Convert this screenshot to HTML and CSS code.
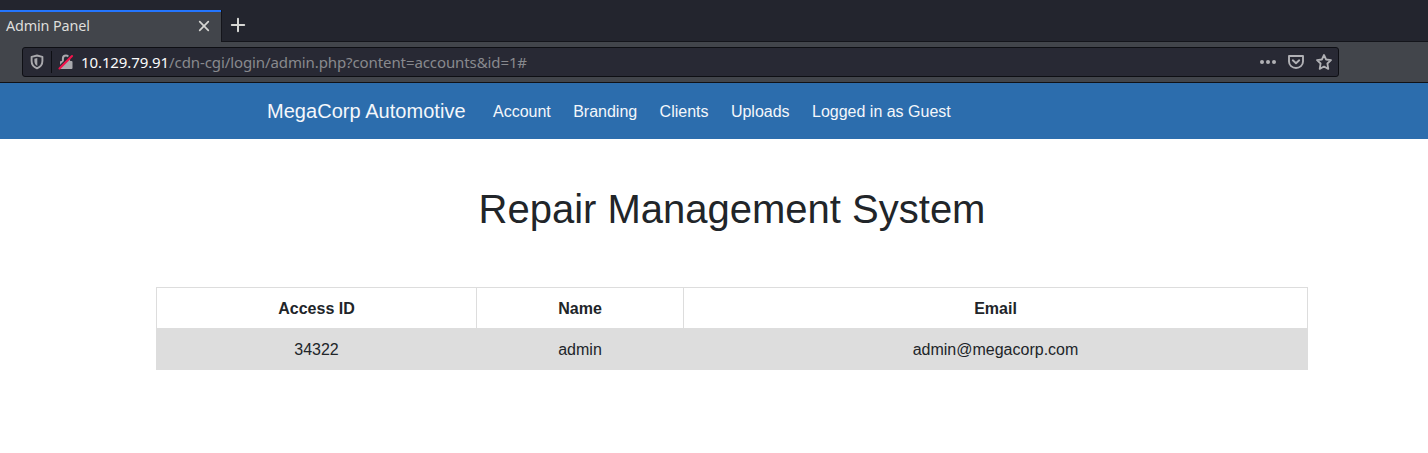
FILE: index.html
```html
<!DOCTYPE html>
<html lang="en">
<head>
<meta charset="utf-8">
<title>Admin Panel</title>
<link rel="stylesheet" href="styles.css">
</head>
<body>
<header class="browser">
  <div class="tabstrip">
    <div class="tab"><span class="tab-title">Admin Panel</span>
      <svg class="tab-close" width="12" height="12" viewBox="0 0 12 12"><path d="M1.7 1.7l8.6 8.6M10.3 1.7l-8.6 8.6" stroke="#d6d6d3" stroke-width="1.7" stroke-linecap="round"/></svg>
    </div>
    <div class="tab-rest">
      <svg width="16" height="16" viewBox="0 0 16 16"><path d="M8 1.8v12.4M1.8 8h12.4" stroke="#d6d6d3" stroke-width="2" stroke-linecap="round"/></svg>
    </div>
  </div>
  <div class="toolbar">
    <div class="urlbar">
      <svg class="shield" width="14" height="16" viewBox="0 0 14 16"><path d="M7 1.5L12.400 2.800V7c0 3.600-2 6-5.400 7.300C3.600 13 1.600 10.600 1.600 7V2.800z" fill="none" stroke="#a9a9ad" stroke-width="1.900" stroke-linejoin="round"/><path d="M7.300 4v8C5.200 10.900 4.400 9.200 4.400 7V4.700z" fill="#a9a9ad"/></svg>
      <span class="divider"></span>
      <svg class="lock" width="16" height="16" viewBox="0 0 16 16"><path d="M4.900 7.500V4.700a3.100 3.100 0 0 1 6.200 0V7.500" fill="none" stroke="#a9a9ad" stroke-width="2"/><rect x="2" y="7" width="12.500" height="8" rx="1" fill="#a9a9ad"/><path d="M.8 13.300L12.700 1.400" stroke="#282934" stroke-width="1.800"/><path d="M1.500 14.500L14 2" stroke="#f2134b" stroke-width="2.100" stroke-linecap="round"/></svg>
      <span class="url"><span class="host">10.129.79.91</span>/cdn-cgi/login/admin.php?content=accounts&amp;id=1#</span>
      <span class="actions">
        <svg width="16" height="16" viewBox="0 0 16 16" fill="#b1b1b5"><circle cx="2" cy="8" r="2"/><circle cx="8" cy="8" r="2"/><circle cx="14" cy="8" r="2"/></svg>
        <svg width="16" height="16" viewBox="0 0 16 16" fill="none" stroke="#b1b1b5" stroke-width="1.900" stroke-linecap="round" stroke-linejoin="round"><path d="M1 2h14v5.500a7 6.500 0 0 1-14 0z"/><path d="M4.800 6.300L8 9.300l3.200-3"/></svg>
        <svg width="16" height="16" viewBox="0 0 16 16" fill="none" stroke="#b1b1b5" stroke-width="1.800" stroke-linejoin="round"><path d="M8 1l2.100 4.500 4.900.6-3.600 3.400.9 5.400L8 12.500l-4.300 2.400.9-5.400L1 6.100l4.900-.6z"/></svg>
      </span>
    </div>
  </div>
</header>
<nav class="nav">
  <a class="brand">MegaCorp Automotive</a>
  <ul class="links"><li>Account</li><li>Branding</li><li>Clients</li><li>Uploads</li><li>Logged in as Guest</li></ul>
</nav>
<main>
  <h1 class="title">Repair Management System</h1>
  <table class="accounts">
    <colgroup><col class="col-id"><col class="col-name"><col></colgroup>
    <tr><th>Access ID</th><th>Name</th><th>Email</th></tr>
    <tr class="shaded"><td>34322</td><td>admin</td><td>admin@megacorp.com</td></tr>
  </table>
</main>
</body>
</html>
```
FILE: styles.css
```css
* { box-sizing: border-box; }
body { margin: 0; background: #fff; color: #212529; font: 16px/24px "Liberation Sans", Arial, sans-serif; overflow: hidden; }
svg { display: block; flex: none; }
.browser { height: 83px; border-bottom: 1px solid #101116; background: #42454b; font-family: "Noto Sans", sans-serif; }
.tabstrip { height: 42px; display: flex; background: #23252e; padding-top: 10px; }
.tab { width: 221px; height: 32px; border-top: 2px solid #2375ff; background: #42454b; display: flex; align-items: center; justify-content: space-between; padding: 0 11px 2px 6px; }
.tab-title { font-size: 14.4px; letter-spacing: -0.15px; color: #dededb; }
.tab-rest { flex: 1; border-left: 1px solid #14151b; border-bottom: 1px solid #14151b; padding: 7px 0 0 8px; }
.toolbar { height: 40px; padding: 5px 89px 0 22px; }
.urlbar { height: 30px; border: 1px solid #0e0f14; border-radius: 3px; background: #282934; display: flex; align-items: center; padding: 0 6px 0 7px; }
.divider { width: 1px; height: 22px; background: #0e0f14; margin: 0 6px 0 7px; }
.url { margin-left: 7px; font-size: 15px; letter-spacing: -0.1px; color: #88898e; white-space: nowrap; }
.host { color: #fafafa; }
.actions { margin-left: auto; display: flex; gap: 12px; }
.nav { height: 56px; background: #2c6dad; color: #f4f7fb; display: flex; align-items: center; padding-left: 267px; }
.brand { font-size: 20px; letter-spacing: 0.04px; }
.links { list-style: none; display: flex; gap: 22.4px; margin: 0 0 0 27.3px; padding: 2px 0 0; }
main { padding: 46px 120px 0 156px; }
.title { margin: 0 0 54px; font-size: 40px; line-height: 48px; font-weight: 400; text-align: center; }
.accounts { width: 1152px; table-layout: fixed; border-collapse: collapse; text-align: center; }
.col-id { width: 320px; }
.col-name { width: 207px; }
.accounts th, .accounts td { border: 1px solid #ddd; padding: 9px 8px 7px; height: 41px; }
.shaded { background: #ddd; }
```
